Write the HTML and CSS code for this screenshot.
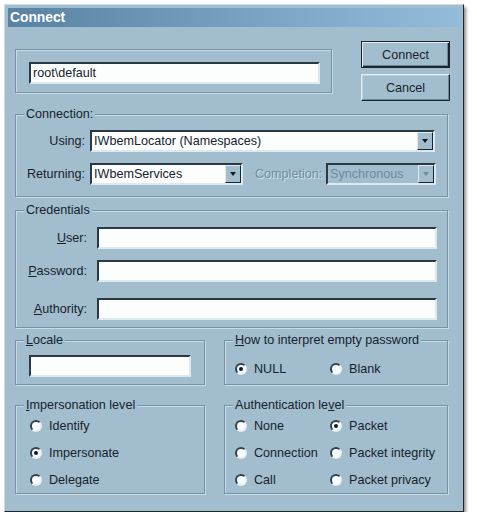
FILE: index.html
```html
<!DOCTYPE html>
<html>
<head>
<meta charset="utf-8">
<title>Connect</title>
<link rel="stylesheet" href="styles.css">
</head>
<body>
<div class="dialog">
  <div class="titlebar">Connect</div>
  <div class="content">
    <div class="top-row">
      <div class="group g-ns">
        <div class="edit w-ns">root\default</div>
      </div>
      <div class="buttons">
        <div class="btn default">Connect</div>
        <div class="btn">Cancel</div>
      </div>
    </div>

    <div class="group g-conn">
      <span class="legend">Connection:</span>
      <div class="gb gb-conn">
        <div class="frow">
          <span class="lbl lbl-conn">Using:</span>
          <div class="combo w-using"><span class="ctext">IWbemLocator (Namespaces)</span><span class="drop"><i class="arrow"></i></span></div>
        </div>
        <div class="frow">
          <span class="lbl lbl-conn">Returning:</span>
          <div class="combo w-ret"><span class="ctext">IWbemServices</span><span class="drop"><i class="arrow"></i></span></div>
          <span class="lbl-dis">Completion:</span>
          <div class="combo disabled w-comp"><span class="ctext">Synchronous</span><span class="drop"><i class="arrow"></i></span></div>
        </div>
      </div>
    </div>

    <div class="group g-cred">
      <span class="legend">Credentials</span>
      <div class="gb gb-cred">
        <div class="frow">
          <span class="lbl lbl-cred"><u>U</u>ser:</span>
          <div class="edit w-cred"></div>
        </div>
        <div class="frow">
          <span class="lbl lbl-cred"><u>P</u>assword:</span>
          <div class="edit w-cred"></div>
        </div>
        <div class="frow frow-wide">
          <span class="lbl lbl-cred"><u>A</u>uthority:</span>
          <div class="edit w-cred"></div>
        </div>
      </div>
    </div>

    <div class="bottom">
      <div class="group">
        <span class="legend"><u>L</u>ocale</span>
        <div class="gb gb-locale">
          <div class="edit w-locale"></div>
        </div>
      </div>
      <div class="group">
        <span class="legend"><u>H</u>ow to interpret empty password</span>
        <div class="gb gb-how radios">
          <div class="radio"><span class="circle on"><i class="dot"></i></span>NULL</div>
          <div class="radio"><span class="circle"></span>Blank</div>
        </div>
      </div>
      <div class="group">
        <span class="legend"><u>I</u>mpersonation level</span>
        <div class="gb gb-imp">
          <div class="radio"><span class="circle"></span>Identify</div>
          <div class="radio"><span class="circle on"><i class="dot"></i></span>Impersonate</div>
          <div class="radio"><span class="circle"></span>Delegate</div>
        </div>
      </div>
      <div class="group">
        <span class="legend">Authentication le<u>v</u>el</span>
        <div class="gb gb-auth radios">
          <div class="radio"><span class="circle"></span>None</div>
          <div class="radio"><span class="circle on"><i class="dot"></i></span>Packet</div>
          <div class="radio"><span class="circle"></span>Connection</div>
          <div class="radio"><span class="circle"></span>Packet integrity</div>
          <div class="radio"><span class="circle"></span>Call</div>
          <div class="radio"><span class="circle"></span>Packet privacy</div>
        </div>
      </div>
    </div>
  </div>
</div>
</body>
</html>
```

FILE: styles.css
```css
body {
  margin: 0;
  background: #ffffff;
  font-family: "Liberation Sans", Arial, sans-serif;
  font-size: 12.6px;
  color: #16232d;
}

.dialog {
  margin: 4px 0 0 4px;
  width: 460px;
  height: 508px;
  box-sizing: border-box;
  background: #a2bdce;
  border: 1px solid;
  border-color: #cddde7 #1d272e #1d272e #cddde7;
  padding: 3px;
  box-shadow: 2px 3px 3px rgba(0, 0, 0, 0.45);
  display: flex;
  flex-direction: column;
}

.titlebar {
  height: 19px;
  line-height: 19px;
  padding-left: 2px;
  background: linear-gradient(90deg, #5882a2 0%, #78a3c3 55%, #92bcda 100%);
  color: #ffffff;
  font-weight: bold;
  font-size: 13.8px;
}

.content {
  padding: 0 10px 0 7px;
  display: flex;
  flex-direction: column;
}

.top-row {
  display: flex;
  align-items: flex-start;
  margin-top: 14px;
  height: 60px;
}

.group {
  box-sizing: border-box;
  border: 1px solid #7892a5;
  box-shadow: inset 1px 1px 0 #c9dbe6, 1px 1px 0 #c9dbe6;
  display: flex;
  flex-direction: column;
}

.legend {
  align-self: flex-start;
  margin: -8px 0 -7px 8px;
  padding: 0 2px;
  height: 15px;
  line-height: 15px;
  background: #a2bdce;
  white-space: nowrap;
}

.g-ns {
  margin-top: 8px;
  width: 317px;
  height: 44px;
  padding: 12px 0 0 13px;
}

.buttons {
  margin-left: auto;
  display: flex;
  flex-direction: column;
  gap: 6px;
}

.btn {
  width: 89px;
  height: 27px;
  box-sizing: border-box;
  display: flex;
  align-items: center;
  justify-content: center;
  border: 1px solid;
  border-color: #e3edf3 #1b252c #1b252c #e3edf3;
  box-shadow: inset -1px -1px 0 #6d889a, inset 1px 1px 0 #bed3df;
}

.btn.default {
  border-color: #1b252c;
  box-shadow: inset 1px 1px 0 #e3edf3, inset -1px -1px 0 #1b252c, inset -2px -2px 0 #6d889a;
}

.edit {
  box-sizing: border-box;
  height: 22px;
  line-height: 18px;
  padding-left: 2px;
  background: #fcfdfd;
  border: 2px solid;
  border-color: #2a3944 #dde9f0 #dde9f0 #2a3944;
  white-space: nowrap;
}

.w-ns { width: 291px; }
.w-cred { width: 340px; }
.w-locale { width: 162px; }

.g-conn {
  margin-top: 13px;
  margin-right: 2px;
  height: 83px;
}

.gb-conn { padding-top: 15px; }

.frow {
  display: flex;
  align-items: center;
  height: 22px;
}

.frow + .frow { margin-top: 11px; }
.frow.frow-wide { margin-top: 16px; }

.lbl {
  text-align: right;
  white-space: nowrap;
}

.lbl-conn { width: 69px; margin-right: 5px; }
.lbl-cred { width: 71px; margin-right: 10px; }

.lbl-dis {
  width: 71px;
  margin-left: 12px;
  color: #6e8ca0;
  text-shadow: 1px 1px 0 #d2e1ea;
}

.combo {
  box-sizing: border-box;
  height: 22px;
  display: flex;
  align-items: stretch;
  background: #fcfdfd;
  border: 2px solid;
  border-color: #2a3944 #dde9f0 #dde9f0 #2a3944;
}

.ctext {
  flex: 1;
  padding-left: 2px;
  line-height: 18px;
  white-space: nowrap;
  overflow: hidden;
}

.drop {
  width: 16px;
  box-sizing: border-box;
  background: #a2bdce;
  border: 1px solid;
  border-color: #dfeaf1 #1b252c #1b252c #dfeaf1;
  display: flex;
  align-items: center;
  justify-content: center;
}

.arrow {
  width: 0;
  height: 0;
  border-left: 3px solid transparent;
  border-right: 3px solid transparent;
  border-top: 4px solid #111a20;
}

.w-using { width: 345px; }
.w-ret { width: 153px; }
.w-comp { width: 110px; }

.combo.disabled {
  background: #a2bdce;
  color: #6e8ca0;
}

.combo.disabled .arrow { border-top-color: #6e8ca0; }

.g-cred {
  margin-top: 13px;
  margin-right: 2px;
  height: 118px;
}

.gb-cred { padding-top: 16px; }

.bottom {
  display: grid;
  grid-template-columns: 190px 224px;
  grid-template-rows: 45px 89px;
  column-gap: 19px;
  row-gap: 20px;
  margin-top: 12px;
}

.gb-locale { padding: 14px 0 0 13px; }

.gb-how {
  padding: 20px 0 0 10px;
}

.radios {
  display: grid;
  grid-template-columns: 95px auto;
  row-gap: 11px;
}

.gb-imp {
  padding: 12px 0 0 14px;
  display: flex;
  flex-direction: column;
  gap: 11px;
}

.gb-auth { padding: 12px 0 0 10px; }

.radio {
  display: flex;
  align-items: center;
  height: 16px;
  white-space: nowrap;
}

.circle {
  flex: none;
  width: 12px;
  height: 12px;
  box-sizing: border-box;
  border-radius: 50%;
  background: #fbfdfd;
  border: 2px solid;
  border-color: #33434e #e6eff4 #e6eff4 #33434e;
  margin-right: 7px;
  display: flex;
  align-items: center;
  justify-content: center;
}

.dot {
  width: 4px;
  height: 4px;
  border-radius: 50%;
  background: #111a20;
}
```
